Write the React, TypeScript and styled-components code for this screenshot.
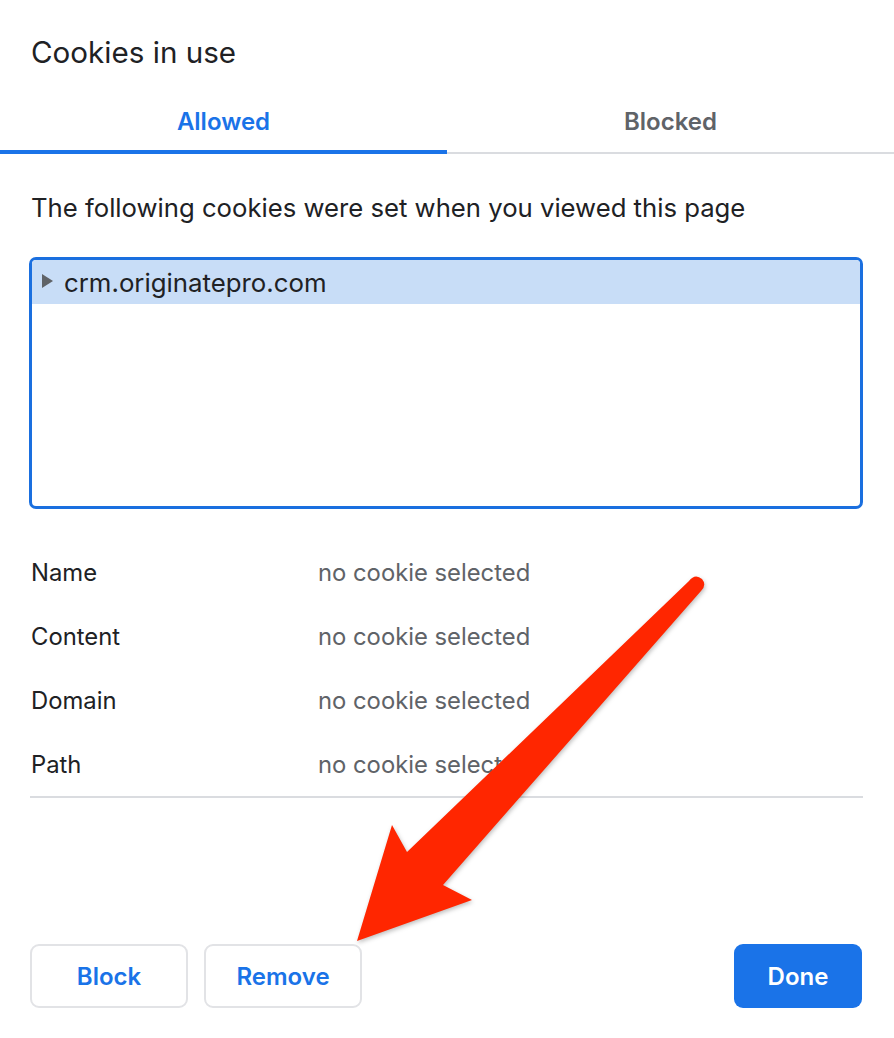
import React from "react";
import styled, { createGlobalStyle } from "styled-components";

const GlobalStyle = createGlobalStyle`
  html, body { margin: 0; padding: 0; background: #ffffff; }
  body { font-family: Inter, "Noto Sans", Roboto, sans-serif; -webkit-font-smoothing: antialiased; }
  * { box-sizing: border-box; }
`;

const Dialog = styled.div`
  position: relative;
  width: 894px;
  height: 1038px;
  display: flex;
  flex-direction: column;
  background: #fff;
  overflow: hidden;
`;

const Title = styled.h1`
  margin: 0;
  padding: 14px 0 0 31px;
  height: 90px;
  line-height: 76px;
  font-size: 29.6px;
  font-weight: 400;
  color: #202124;
`;

const TabBar = styled.div`
  display: flex;
  height: 64px;
  border-bottom: 2px solid #dadce0;
`;

const Tab = styled.div<{ $active?: boolean }>`
  flex: 1;
  display: flex;
  align-items: center;
  justify-content: center;
  font-size: 24px;
  font-weight: 600;
  color: ${(p) => (p.$active ? "#1a73e8" : "#5f6368")};
  position: relative;
  &::after {
    content: "";
    display: ${(p) => (p.$active ? "block" : "none")};
    position: absolute;
    left: 0;
    right: 0;
    bottom: -2px;
    height: 4px;
    background: #1a73e8;
  }
`;

const Body = styled.div`
  padding: 0 31px 0 29px;
  display: flex;
  flex-direction: column;
`;

const Description = styled.p`
  margin: 32px 0 0 2px;
  line-height: 44px;
  font-size: 25.7px;
  color: #202124;
`;

const TreeBox = styled.div`
  margin-top: 27px;
  height: 252px;
  border: 3px solid #1a6fdf;
  border-radius: 7px;
  overflow: hidden;
`;

const TreeRow = styled.div`
  display: flex;
  align-items: center;
  height: 44px;
  background: #c8ddf7;
  padding-left: 10px;
  font-size: 25.8px;
  color: #202124;
`;

const Caret = styled.span`
  width: 0;
  height: 0;
  border-top: 7px solid transparent;
  border-bottom: 7px solid transparent;
  border-left: 11px solid #5f6368;
  margin-right: 11px;
  margin-top: -2px;
`;

const Details = styled.div`
  margin-top: 31px;
  display: flex;
  flex-direction: column;
  border-bottom: 2px solid #dadce0;
  margin-left: 1px;
`;

const DetailRow = styled.div`
  display: grid;
  grid-template-columns: 288px 1fr;
  height: 64px;
  align-items: center;
  font-size: 23.8px;
`;

const Label = styled.span`
  color: #202124;
  padding-left: 1px;
`;

const Value = styled.span`
  color: #5f6368;
`;

const Spacer = styled.div`
  flex: 1;
`;

const Footer = styled.div`
  display: flex;
  align-items: center;
  padding: 0 32px 30px 30px;
  gap: 16px;
`;

const Button = styled.button<{ $primary?: boolean }>`
  height: 64px;
  width: ${(p) => (p.$primary ? "128px" : "158px")};
  margin-left: ${(p) => (p.$primary ? "auto" : "0")};
  border-radius: 9px;
  border: ${(p) => (p.$primary ? "none" : "2px solid #e2e3e6")};
  background: ${(p) => (p.$primary ? "#1a73e8" : "#ffffff")};
  color: ${(p) => (p.$primary ? "#ffffff" : "#1a73e8")};
  font-family: inherit;
  font-size: 24px;
  font-weight: 600;
  cursor: pointer;
  padding: 0;
`;

const ArrowLayer = styled.svg`
  position: absolute;
  left: 0;
  top: 0;
  width: 894px;
  height: 1038px;
  pointer-events: none;
  filter: drop-shadow(1px 2px 2px rgba(0, 0, 0, 0.25));
`;

const rows = ["Name", "Content", "Domain", "Path"];

export default function App() {
  return (
    <>
      <GlobalStyle />
      <Dialog>
        <Title>Cookies in use</Title>
        <TabBar>
          <Tab $active>Allowed</Tab>
          <Tab>Blocked</Tab>
        </TabBar>
        <Body>
          <Description>The following cookies were set when you viewed this page</Description>
          <TreeBox>
            <TreeRow>
              <Caret />
              crm.originatepro.com
            </TreeRow>
          </TreeBox>
          <Details>
            {rows.map((r) => (
              <DetailRow key={r}>
                <Label>{r}</Label>
                <Value>no cookie selected</Value>
              </DetailRow>
            ))}
          </Details>
        </Body>
        <Spacer />
        <Footer>
          <Button>Block</Button>
          <Button>Remove</Button>
          <Button $primary>Done</Button>
        </Footer>
        <ArrowLayer viewBox="0 0 894 1038">
          <path
            d="M 689 581 Q 695 573 702 579 Q 707 585 701 591 L 443 885 L 472 900 L 357 941 L 392 825 L 407 852 Z"
            fill="#ff2600"
          />
        </ArrowLayer>
      </Dialog>
    </>
  );
}
